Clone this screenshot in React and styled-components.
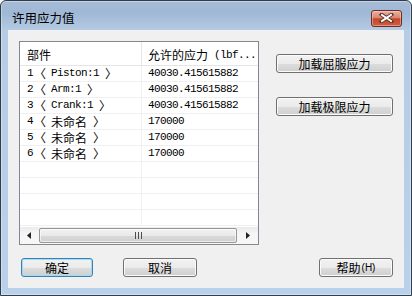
import styled, { createGlobalStyle } from "styled-components";

const GlobalStyle = createGlobalStyle`
  html, body {
    margin: 0;
    padding: 0;
    width: 412px;
    height: 296px;
    overflow: hidden;
    background: #ffffff;
  }
  body {
    font-family: "Noto Sans CJK SC", "Liberation Sans", sans-serif;
    font-size: 12px;
    color: #000000;
  }
`;

const Window = styled.div`
  width: 412px;
  height: 296px;
  box-sizing: border-box;
  border: 1px solid #2f3d4c;
  border-radius: 6px 6px 0 0;
  background: linear-gradient(180deg, #a6bcd7 0, #9fb8d5 12px, #b6cce5 30px, #bad1ea 100%);
  box-shadow: inset 0 0 0 1px rgba(255, 255, 255, 0.35);
  display: flex;
  flex-direction: column;
  padding: 0 7px 7px 7px;
`;

const TitleBar = styled.div`
  height: 29px;
  box-sizing: border-box;
  display: flex;
  align-items: center;
  justify-content: space-between;
  padding: 8px 2px 3px 4px;
`;

const Title = styled.span`
  font-size: 12.5px;
  line-height: 1;
  color: #000000;
`;

const CloseButton = styled.div`
  width: 31px;
  height: 17px;
  box-sizing: border-box;
  border: 1px solid #6f2a22;
  border-radius: 3px;
  background: linear-gradient(180deg, #eab0a2 0%, #d88672 45%, #c5472c 52%, #cf5d3c 100%);
  box-shadow: inset 0 0 0 1px rgba(255, 220, 210, 0.45);
  display: flex;
  align-items: center;
  justify-content: center;
`;

const Client = styled.div`
  flex: 1;
  background: #f0f0f0;
  display: flex;
  flex-direction: column;
  padding: 11px 11px 0 11px;
`;

const MainRow = styled.div`
  display: flex;
  align-items: flex-start;
`;

const ListView = styled.div`
  width: 240px;
  height: 204px;
  box-sizing: border-box;
  border: 1px solid #828790;
  background: #ffffff;
  display: flex;
  flex-direction: column;
`;

const HeaderRow = styled.div`
  display: grid;
  grid-template-columns: 122px 1fr;
  height: 24px;
  box-sizing: border-box;
  border-bottom: 1px solid #e5e5e5;
`;

const HeaderCell = styled.div`
  display: flex;
  align-items: center;
  padding: 2px 0 0 ${(p) => (p.$first ? 7 : 6)}px;
  border-right: ${(p) => (p.$first ? "1px solid #e5e5e5" : "none")};
  white-space: nowrap;
  overflow: hidden;
  font-size: 12px;
  color: #000000;
`;

const Row = styled.div`
  display: grid;
  grid-template-columns: 122px 1fr;
  height: 16px;
  box-sizing: border-box;
  border-bottom: 1px solid #f0f0f0;
`;

const Cell = styled.div`
  display: flex;
  align-items: center;
  padding-left: ${(p) => (p.$first ? 7 : 6)}px;
  border-right: ${(p) => (p.$first ? "1px solid #f0f0f0" : "none")};
  white-space: nowrap;
  overflow: hidden;
  line-height: 15px;
`;

const Mono = styled.span`
  font-family: "Liberation Mono", "DejaVu Sans Mono", monospace;
  font-size: 11px;
  letter-spacing: -0.6px;
  white-space: pre;
  color: #000000;
`;

const Han = styled.span`
  font-family: "Noto Sans CJK SC", sans-serif;
  font-size: 12px;
  white-space: pre;
`;

const OpenBracket = styled(Han)`
  margin-left: -5px;
  margin-right: 5px;
`;

const Scrollbar = styled.div`
  margin-top: auto;
  height: 17px;
  display: flex;
  align-items: center;
  background: linear-gradient(180deg, #ebebeb 0%, #f5f5f5 40%, #f7f7f7 100%);
`;

const ScrollArrow = styled.div`
  width: ${(p) => p.$w}px;
  height: 17px;
  display: flex;
  align-items: center;
  justify-content: center;
`;

const Thumb = styled.div`
  flex: 1;
  height: 15px;
  margin: 0 1px;
  box-sizing: border-box;
  border: 1px solid #979797;
  border-radius: 2px;
  background: linear-gradient(180deg, #f3f3f3 0%, #e9e9e9 50%, #d9d9d9 55%, #d0d0d0 100%);
  box-shadow: inset 0 0 0 1px rgba(255, 255, 255, 0.6);
  display: flex;
  align-items: center;
  justify-content: center;
`;

const SideColumn = styled.div`
  margin-left: 17px;
  padding-top: 13px;
  display: flex;
  flex-direction: column;
  gap: 24px;
`;

const Button = styled.div`
  width: ${(p) => p.$w}px;
  height: 19px;
  box-sizing: border-box;
  border: 1px solid ${(p) => (p.$default ? "#3c7fb1" : "#707070")};
  border-radius: 3px;
  background: linear-gradient(180deg, #f2f2f2 0%, #ebebeb 50%, #dddddd 51%, #cfcfcf 100%);
  box-shadow: inset 0 0 0 1px ${(p) => (p.$default ? "#9fdcf7" : "#fbfbfb")};
  display: flex;
  align-items: center;
  justify-content: center;
  font-size: 12px;
  line-height: 1;
  color: #000000;
  margin-left: ${(p) => (p.$push ? "auto" : "0")};
`;

const Small = styled.span`
  font-family: "Liberation Sans", sans-serif;
  font-size: 10px;
  margin-left: 1px;
`;

const Footer = styled.div`
  display: flex;
  margin-top: 13px;
  padding-left: 2px;
  gap: 30px;
`;

const rows = [
  { idx: 1, name: "Piston:1", value: "40030.415615882" },
  { idx: 2, name: "Arm:1", value: "40030.415615882" },
  { idx: 3, name: "Crank:1", value: "40030.415615882" },
  { idx: 4, name: "未命名", han: true, value: "170000" },
  { idx: 5, name: "未命名", han: true, value: "170000" },
  { idx: 6, name: "未命名", han: true, value: "170000" },
];

function CloseGlyph() {
  return (
    <svg width="15" height="10" viewBox="0 0 15 10">
      <path d="M2.5 1.5 L12.5 8.5 M12.5 1.5 L2.5 8.5" stroke="#5a2a24" strokeWidth="3.6" strokeLinecap="square" />
      <path d="M3 2 L12 8 M12 2 L3 8" stroke="#ffffff" strokeWidth="2" strokeLinecap="square" />
    </svg>
  );
}

function Arrow({ dir }) {
  return (
    <svg width="4" height="7" viewBox="0 0 4 7">
      {dir === "left" ? (
        <path d="M4 0 L0 3.5 L4 7 Z" fill="#222" />
      ) : (
        <path d="M0 0 L4 3.5 L0 7 Z" fill="#222" />
      )}
    </svg>
  );
}

function Grip() {
  return (
    <svg width="7" height="7" viewBox="0 0 7 7">
      <path d="M0.5 0 V7 M3.5 0 V7 M6.5 0 V7" stroke="#4d4d4d" strokeWidth="1" />
    </svg>
  );
}

function PartName({ idx, name, han }) {
  return (
    <>
      <Mono>{idx} </Mono>
      <OpenBracket>〈</OpenBracket>
      {han ? <Han>{name}</Han> : <Mono>{name}</Mono>}
      <Mono> </Mono>
      <Han>〉</Han>
    </>
  );
}

export default function App() {
  const empty = Array.from({ length: 4 });
  return (
    <>
      <GlobalStyle />
      <Window>
        <TitleBar>
          <Title>许用应力值</Title>
          <CloseButton>
            <CloseGlyph />
          </CloseButton>
        </TitleBar>
        <Client>
          <MainRow>
            <ListView>
              <HeaderRow>
                <HeaderCell $first>部件</HeaderCell>
                <HeaderCell>
                  允许的应力<Mono> (lbf...</Mono>
                </HeaderCell>
              </HeaderRow>
              {rows.map((r) => (
                <Row key={r.idx}>
                  <Cell $first>
                    <PartName {...r} />
                  </Cell>
                  <Cell>
                    <Mono>{r.value}</Mono>
                  </Cell>
                </Row>
              ))}
              {empty.map((_, i) => (
                <Row key={"e" + i}>
                  <Cell $first />
                  <Cell />
                </Row>
              ))}
              <Scrollbar>
                <ScrollArrow $w={18}>
                  <Arrow dir="left" />
                </ScrollArrow>
                <Thumb>
                  <Grip />
                </Thumb>
                <ScrollArrow $w={20}>
                  <Arrow dir="right" />
                </ScrollArrow>
              </Scrollbar>
            </ListView>
            <SideColumn>
              <Button $w={117}>加载屈服应力</Button>
              <Button $w={117}>加载极限应力</Button>
            </SideColumn>
          </MainRow>
          <Footer>
            <Button $w={72} $default>
              确定
            </Button>
            <Button $w={74}>取消</Button>
            <Button $w={74} $push>
              帮助<Small>(H)</Small>
            </Button>
          </Footer>
        </Client>
      </Window>
    </>
  );
}
